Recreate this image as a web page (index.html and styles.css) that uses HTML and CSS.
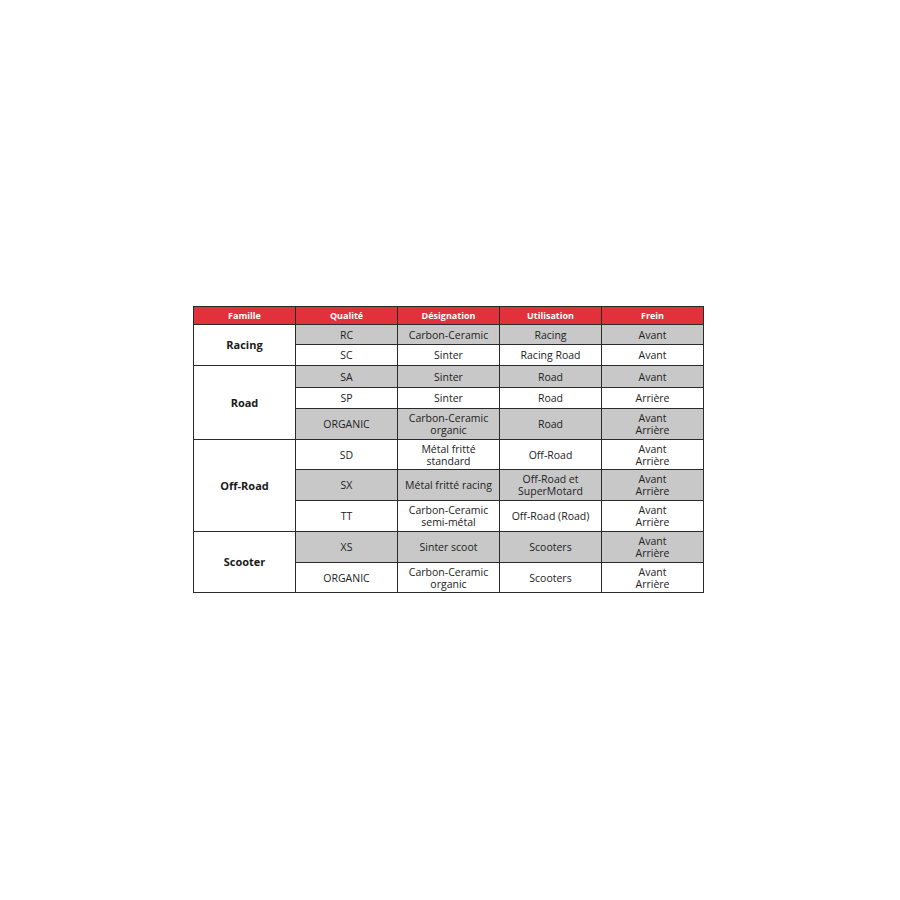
FILE: index.html
```html
<!DOCTYPE html>
<html lang="fr">
<head>
<meta charset="utf-8">
<title>Plaquettes</title>
<link rel="stylesheet" href="styles.css">
</head>
<body>
<table class="grid">
  <colgroup><col class="c"><col class="c"><col class="c"><col class="c"><col class="c"></colgroup>
  <thead>
    <tr class="h"><th>Famille</th><th>Qualité</th><th>Désignation</th><th>Utilisation</th><th>Frein</th></tr>
  </thead>
  <tbody>
    <tr class="s g"><td class="fam" rowspan="2">Racing</td><td>RC</td><td>Carbon-Ceramic</td><td>Racing</td><td>Avant</td></tr>
    <tr class="s2"><td>SC</td><td>Sinter</td><td>Racing Road</td><td>Avant</td></tr>
    <tr class="s3 g"><td class="fam" rowspan="3">Road</td><td>SA</td><td>Sinter</td><td>Road</td><td>Avant</td></tr>
    <tr class="s2"><td>SP</td><td>Sinter</td><td>Road</td><td>Arrière</td></tr>
    <tr class="d g"><td>ORGANIC</td><td>Carbon-Ceramic<br>organic</td><td>Road</td><td>Avant<br>Arrière</td></tr>
    <tr class="d2"><td class="fam" rowspan="3">Off-Road</td><td>SD</td><td>Métal fritté<br>standard</td><td>Off-Road</td><td>Avant<br>Arrière</td></tr>
    <tr class="d g"><td>SX</td><td>Métal fritté racing</td><td>Off-Road et<br>SuperMotard</td><td>Avant<br>Arrière</td></tr>
    <tr class="d"><td>TT</td><td>Carbon-Ceramic<br>semi-métal</td><td>Off-Road (Road)</td><td>Avant<br>Arrière</td></tr>
    <tr class="d g"><td class="fam" rowspan="2">Scooter</td><td>XS</td><td>Sinter scoot</td><td>Scooters</td><td>Avant<br>Arrière</td></tr>
    <tr class="d2"><td>ORGANIC</td><td>Carbon-Ceramic<br>organic</td><td>Scooters</td><td>Avant<br>Arrière</td></tr>
  </tbody>
</table>
</body>
</html>
```
FILE: styles.css
```css
html, body {
  margin: 0;
  padding: 0;
  background: #ffffff;
}
body {
  padding: 306px 0 0 193px;
  font-family: "Open Sans", "Noto Sans", "Liberation Sans", sans-serif;
}
.grid {
  border-collapse: collapse;
  table-layout: fixed;
  width: 511px;
  border: 1px solid #2a2a2a;
  color: #222222;
  font-size: 10.5px;
  line-height: 12px;
}
.grid .c { width: 102px; }
.grid th, .grid td {
  border: 1px solid #2a2a2a;
  padding: 0;
  text-align: center;
  vertical-align: middle;
}
.grid th {
  background: #e3313b;
  color: #ffffff;
  font-weight: 700;
  font-size: 9px;
  height: 17px;
}
.grid tr.s td { height: 19px; }
.grid tr.s2 td { height: 20px; }
.grid tr.s3 td { height: 21px; }
.grid tr.d td { height: 30px; }
.grid tr.d2 td { height: 29px; }
.grid tr.g td { background: #c8c8c8; }
.grid tr td.fam {
  background: #ffffff;
  font-weight: 700;
  font-size: 11px;
  color: #1a1a1a;
}
```
